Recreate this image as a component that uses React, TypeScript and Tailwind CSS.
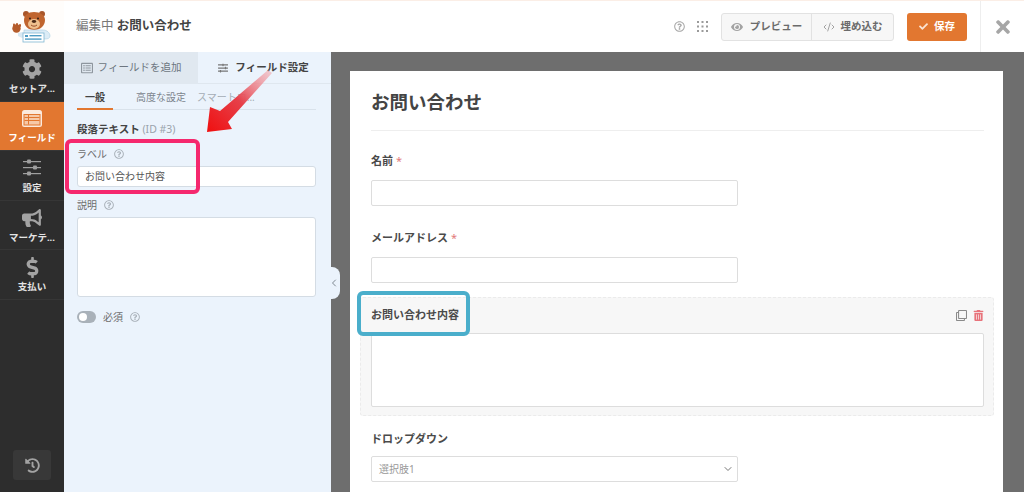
import { ChevronDown, ChevronLeft, CodeXml } from "lucide-react";
import {
	FaBullhorn,
	FaCheck,
	FaCog,
	FaDollarSign,
	FaEye,
	FaHistory,
	FaRegClone,
	FaRegListAlt,
	FaRegQuestionCircle,
	FaSlidersH,
	FaTimes,
	FaTrashAlt,
} from "react-icons/fa";

function FieldsIcon() {
	return (
		<svg width="20" height="17" viewBox="0 0 20 17">
			<rect width="20" height="17" rx="2.5" fill="#fbeadd" />
			<rect x="1.5" y="4" width="17" height="11.5" fill="#e27730" />
			<rect x="2.5" y="5" width="15" height="9.5" fill="#f6c9a8" />
			<rect x="2.5" y="7" width="15" height="1" fill="#e27730" />
			<rect x="2.5" y="10" width="15" height="1" fill="#e27730" />
			<rect x="6" y="5" width="1" height="9.5" fill="#e27730" />
		</svg>
	);
}

function SlidersIcon() {
	return (
		<svg width="18" height="17" viewBox="0 0 18 17" fill="#9f9f9f">
			<rect y="2" width="18" height="1.2" />
			<rect y="8" width="18" height="1.2" />
			<rect y="14" width="18" height="1.2" />
			<rect x="4" y="0.5" width="4" height="4" rx="1" />
			<rect x="10" y="6.5" width="4" height="4" rx="1" />
			<rect x="4" y="12.5" width="4" height="4" rx="1" />
		</svg>
	);
}

const navItems = [
	{ label: "セットア...", icon: <FaCog size={20} /> },
	{ label: "フィールド", icon: <FieldsIcon />, active: true },
	{ label: "設定", icon: <SlidersIcon /> },
	{ label: "マーケテ...", icon: <FaBullhorn size={20} /> },
	{ label: "支払い", icon: <FaDollarSign size={21} /> },
];

function Help({ className = "" }: { className?: string }) {
	return <FaRegQuestionCircle size={10} className={`text-[#a9b1b9] ${className}`} />;
}

function BearLogo() {
	return (
		<svg width="64" height="52" viewBox="0 0 64 52">
			<circle cx="26" cy="13" r="3" fill="#a8562a" />
			<circle cx="42" cy="13" r="3" fill="#a8562a" />
			<path d="M24 19c0-5 4-8 10-8s11 3 11 8c0 6-5 10-11 10s-10-4-10-10z" fill="#c0652f" />
			<ellipse cx="34" cy="23" rx="6" ry="5" fill="#eec08e" />
			<circle cx="30" cy="17.5" r="1" fill="#33231a" />
			<circle cx="38" cy="17.5" r="1" fill="#33231a" />
			<ellipse cx="34" cy="20.5" rx="2.2" ry="1.4" fill="#4a2a18" />
			<path d="M31 24c2 1.6 4 1.6 6 0" stroke="#8a3f1e" strokeWidth="0.9" fill="none" />
			<path d="M18 32l5-1 2 3-3 3-4-2z" fill="#d9e9f3" />
			<circle cx="16.5" cy="27.5" r="4.2" fill="#b55c2b" />
			<rect x="13" y="22.5" width="2" height="3" rx="1" fill="#b55c2b" />
			<rect x="16" y="22" width="2" height="3" rx="1" fill="#b55c2b" />
			<rect x="19" y="23" width="2" height="3" rx="1" fill="#b55c2b" />
			<path d="M24 29h19c4 0 7 3 7 6 0 2-2 3-5 3H24z" fill="#dcecf6" stroke="#a9cfe3" strokeWidth="0.6" />
			<rect x="23" y="32" width="21" height="9" fill="#fff" stroke="#7fb6d3" strokeWidth="0.8" />
			<rect x="25" y="34" width="3" height="2" fill="#4f9cc4" />
			<rect x="29.5" y="34" width="12" height="1.4" fill="#4f9cc4" />
			<rect x="25" y="37.4" width="16.5" height="1.4" fill="#4f9cc4" />
		</svg>
	);
}

function GridDots() {
	const dots = [2, 6.5, 11];
	return (
		<svg width="13" height="13" viewBox="0 0 13 13" className="text-[#9a9a9a]">
			{dots.flatMap((y) => dots.map((x) => <rect key={`${x}-${y}`} x={x - 1} y={y - 1} width="2" height="2" fill="currentColor" />))}
		</svg>
	);
}

function FieldLabel({ children, required }: { children: string; required?: boolean }) {
	return (
		<div className="text-[11px] font-bold leading-[14px] text-[#4a4a4a]">
			{children}
			{required && <span className="ml-[3px] font-normal text-[#e27a7a]">*</span>}
		</div>
	);
}

export default function App() {
	return (
		<div
			className="relative flex h-[492px] w-[1024px] flex-col overflow-hidden bg-[#6e6e6e]"
			style={{ fontFamily: '"Noto Sans", "Noto Sans CJK JP", sans-serif' }}
		>
			{/* Top bar */}
			<header className="flex h-[52px] shrink-0 items-center border-t border-[#fbeee6] bg-white">
				<div className="h-full w-[64px] shrink-0 bg-[#fffdfb]">
					<BearLogo />
				</div>
				<div className="ml-[12px] text-[12.5px] leading-none text-[#777]">
					編集中 <span className="font-bold text-[#444]">お問い合わせ</span>
				</div>
				<div className="ml-auto flex h-full items-center">
					<FaRegQuestionCircle size={11} className="text-[#a8a8a8]" />
					<div className="ml-[11px]">
						<GridDots />
					</div>
					<div className="ml-[12px] flex h-[28px] items-center rounded-[3px] border border-[#e2e2e2] bg-[#f7f7f7] text-[10.5px] font-bold text-[#6b6b6b]">
						<div className="flex h-full w-[90px] items-center justify-center gap-[7px] border-r border-[#e2e2e2]">
							<FaEye size={12} className="text-[#a3a3a3]" />
							プレビュー
						</div>
						<div className="flex h-full w-[81px] items-center justify-center gap-[6px]">
							<CodeXml size={12} className="text-[#a3a3a3]" />
							埋め込む
						</div>
					</div>
					<div className="ml-[13px] flex h-[28px] w-[60px] items-center justify-center gap-[6px] rounded-[3px] bg-[#e27730] text-[10.5px] font-bold text-[#fff]">
						<FaCheck size={9} className="text-[#fbe3d2]" />
						保存
					</div>
					<div className="ml-[13px] flex h-full w-[44px] items-center justify-center border-l border-[#eeeeee]">
						<FaTimes size={20} className="text-[#a6a6a6]" />
					</div>
				</div>
			</header>

			<div className="flex min-h-0 flex-1">
				{/* Left nav */}
				<nav className="flex w-[64px] shrink-0 flex-col bg-[#2d2d2d]">
					{navItems.map((item) => (
						<div
							key={item.label}
							className={`flex h-[49.6px] flex-col items-center justify-center gap-[3px] border-b border-[#363636] ${
								item.active ? "bg-[#e27730] text-white" : "text-[#a3a3a3]"
							}`}
						>
							<div className="flex h-[22px] items-center">{item.icon}</div>
							<span className={`text-[9.5px] font-bold leading-[12px] ${item.active ? "text-white" : "text-[#e4e4e4]"}`}>
								{item.label}
							</span>
						</div>
					))}
					<div className="mt-auto mb-[12px] ml-[13px] flex h-[30px] w-[38px] items-center justify-center rounded-[3px] bg-[#383838]">
						<FaHistory size={15} className="text-[#a3a3a3]" />
					</div>
				</nav>

				{/* Field options panel */}
				<aside className="flex w-[267px] shrink-0 flex-col bg-[#ebf3fc]">
					<div className="flex h-[32px] shrink-0 text-[10.5px]">
						<div className="flex w-[134px] items-center justify-center gap-[5px] bg-[#e0e8f0] text-[#6d7680]">
							<FaRegListAlt size={12} className="text-[#8e969e]" />
							フィールドを追加
						</div>
						<div className="flex flex-1 items-center justify-center gap-[7px] border-b border-[#dfe7ef] pr-[2px] font-bold text-[#444]">
							<FaSlidersH size={10} className="text-[#777]" />
							フィールド設定
						</div>
					</div>
					<div className="pr-[15px] pl-[13px]">
						<div className="flex h-[26px] items-start border-b border-[#d9e2eb] pt-[6px] text-[10px] leading-[14px] text-[#7b848d]">
							<div className="-mb-px flex h-[20px] w-[36px] justify-center border-b-2 border-[#e27730] font-bold text-[#444]">一般</div>
							<div className="ml-[23px]">高度な設定</div>
							<div className="ml-[11px] text-[#a5adb5]">スマートロ...</div>
						</div>
						<div className="mt-[12px] text-[10.5px] font-bold leading-[14px] text-[#444]">
							段落テキスト <span className="font-normal text-[#9aa3ab]">(ID #3)</span>
						</div>
						<div className="mt-[11px] flex h-[14px] items-center gap-[7px] text-[10px] text-[#6d6d6d]">
							ラベル <Help />
						</div>
						<div className="mt-[5px] flex h-[21px] items-center rounded-[3px] border border-[#d4dce4] bg-white px-[7px] text-[10px] text-[#555]">
							お問い合わせ内容
						</div>
						<div className="mt-[11px] flex h-[14px] items-center gap-[7px] text-[10px] text-[#6d6d6d]">
							説明 <Help />
						</div>
						<div className="mt-[5px] h-[80px] rounded-[3px] border border-[#d4dce4] bg-white" />
						<div className="mt-[14px] flex h-[12px] items-center gap-[7px] text-[10px] text-[#6d6d6d]">
							<div className="flex h-[12px] w-[19px] items-center rounded-full bg-[#a9b1b9] pl-[2px]">
								<div className="size-[8px] rounded-full bg-white" />
							</div>
							必須 <Help />
						</div>
					</div>
				</aside>

				{/* Form preview */}
				<main className="min-w-0 flex-1 pt-[19px] pr-[21px] pl-[19px]">
					<div className="h-[500px] bg-white pr-[19px] pl-[21px]">
						<div className="flex h-[60px] items-end border-b border-[#eeeeee] pb-[15px] text-[18.5px] font-bold leading-[27px] text-[#444]">
							お問い合わせ
						</div>
						<div className="mt-[23px]">
							<FieldLabel required>名前</FieldLabel>
							<div className="mt-[12px] h-[26px] w-[367px] rounded-[2px] border border-[#dddddd] bg-white" />
						</div>
						<div className="mt-[25px]">
							<FieldLabel required>メールアドレス</FieldLabel>
							<div className="mt-[12px] h-[26px] w-[367px] rounded-[2px] border border-[#dddddd] bg-white" />
						</div>
						<div className="mt-[14px] mr-[-10px] ml-[-11px] h-[119px] rounded-[3px] border border-dashed border-[#ebebeb] bg-[#f7f7f7] pt-[10px] pr-[9px] pl-[10px]">
							<div className="flex h-[14px] items-center justify-between">
								<FieldLabel>お問い合わせ内容</FieldLabel>
								<div className="flex items-center gap-[6px]">
									<FaRegClone size={11} className="text-[#8a8a8a]" />
									<FaTrashAlt size={11} className="text-[#e8737b]" />
								</div>
							</div>
							<div className="mt-[11px] h-[74px] rounded-[2px] border border-[#dddddd] bg-white" />
						</div>
						<div className="mt-[16px]">
							<FieldLabel>ドロップダウン</FieldLabel>
							<div className="mt-[10px] flex h-[26px] w-[367px] items-center justify-between rounded-[2px] border border-[#dddddd] bg-white pr-[3px] pl-[7px] text-[10px] text-[#999]">
								選択肢1
								<ChevronDown size={12} className="text-[#777]" />
							</div>
						</div>
					</div>
				</main>
			</div>

			{/* Panel collapse handle */}
			<div className="absolute top-[267px] left-[331px] flex h-[32px] w-[9px] items-center justify-start rounded-r-[8px] bg-[#ebf3fc]">
				<ChevronLeft size={12} className="-ml-[3px] text-[#7f8891]" />
			</div>

			{/* Annotations */}
			<div className="absolute top-[139px] left-[65px] h-[55px] w-[135px] rounded-[6px] border-[4px] border-[#f5286e]" />
			<div className="absolute top-[291px] left-[357px] h-[45px] w-[113px] rounded-[6px] border-[4px] border-[#4aaecb]" />
			<svg className="absolute top-[60px] left-[200px]" width="80" height="80" viewBox="0 0 80 80">
				<defs>
					<linearGradient id="arrowFade" x1="1" y1="0" x2="0" y2="1">
						<stop offset="0" stopColor="#f3b4ba" stopOpacity="0.6" />
						<stop offset="0.5" stopColor="#e6404a" />
						<stop offset="1" stopColor="#f00f0f" />
					</linearGradient>
				</defs>
				<path d="M7 72L10 47 20 51 68 10 72 13 28 62 32 69z" fill="url(#arrowFade)" />
			</svg>
		</div>
	);
}
